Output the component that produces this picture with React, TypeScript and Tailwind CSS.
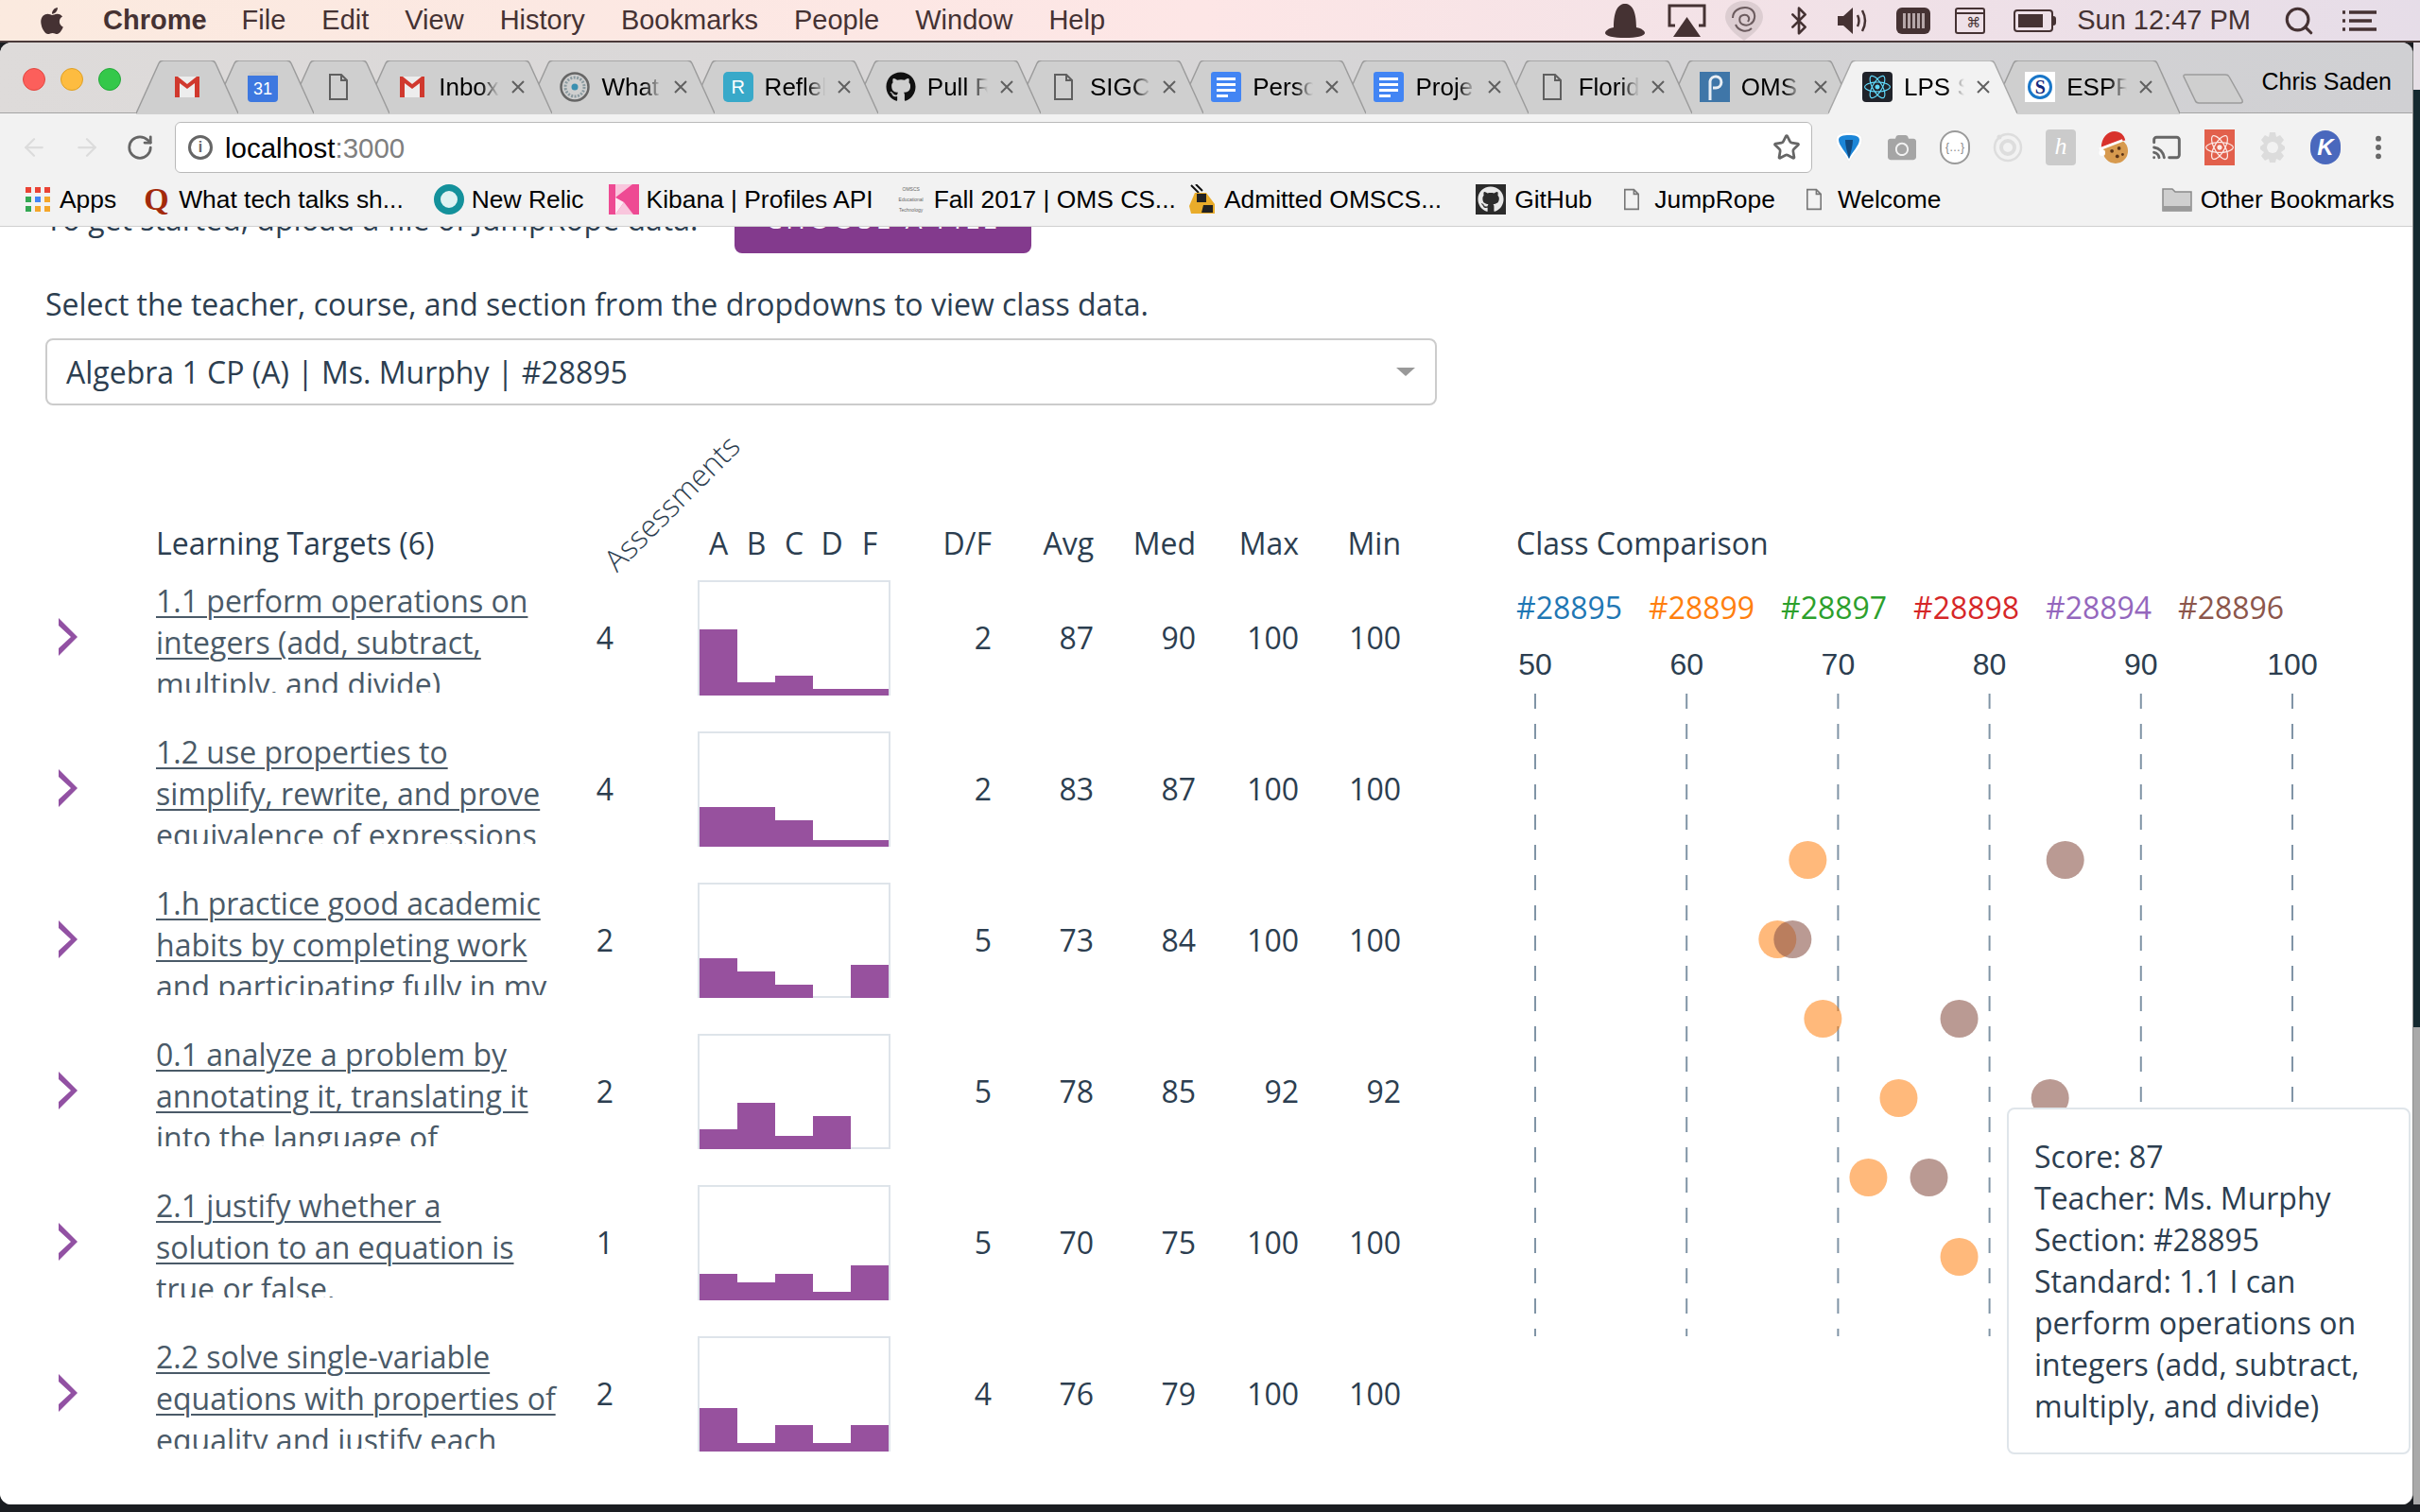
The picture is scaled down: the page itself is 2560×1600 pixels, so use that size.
import React from "react";
import { FaApple, FaGithub, FaReact, FaCamera } from "react-icons/fa";
import { Bluetooth, Search, Star, RotateCw, ArrowLeft, ArrowRight, Cast, EllipsisVertical } from "lucide-react";

const Gmail = () => (
  <svg width="32" height="32" viewBox="0 0 32 32" className="shrink-0">
    <path d="M3 5h26v22H3z" fill="#ededed" />
    <path d="M3 27V5h3l10 8 10-8h3v22h-5V12l-8 6-8-6v15z" fill="#d0392e" />
  </svg>
);
const Cal = () => (
  <div className="w-[32px] h-[32px] shrink-0 flex flex-col">
    <div className="h-[4px] mx-[1px] bg-[#c8c8c8] rounded-t-sm" />
    <div className="flex-1 rounded-b-sm bg-[#3d78e0] text-white text-[18px] leading-[28px] text-center">31</div>
  </div>
);
const FileI = ({ w = 20, h = 28, c = "#5f5f5f", sw = 2 }: { w?: number; h?: number; c?: string; sw?: number }) => (
  <svg width={w} height={h} viewBox="0 0 20 28" className="shrink-0">
    <path d="M1 1h12l6 6v20H1z M13 1v6h6" fill="none" stroke={c} strokeWidth={sw} />
  </svg>
);
const Wheel = () => (
  <svg width="32" height="32" viewBox="0 0 32 32" className="shrink-0">
    <circle cx="16" cy="16" r="14.5" fill="none" stroke="#666" strokeWidth="2.5" />
    <circle cx="16" cy="16" r="10" fill="none" stroke="#8a9aa0" strokeWidth="3" strokeDasharray="2 1.5" />
    <circle cx="16" cy="16" r="3.5" fill="#3a8fb0" />
  </svg>
);
const RIcon = () => (
  <div className="w-[32px] h-[32px] shrink-0 rounded-[5px] bg-[#38a9c9] text-white text-[20px] leading-[32px] text-center">R</div>
);
const Docs = () => (
  <div className="w-[32px] h-[32px] shrink-0 rounded-[3px] bg-[#4285f4] flex flex-col justify-center gap-[3px] pl-[6px]">
    <div className="w-[20px] h-[3px] bg-white" />
    <div className="w-[20px] h-[3px] bg-white" />
    <div className="w-[20px] h-[3px] bg-white" />
    <div className="w-[12px] h-[3px] bg-white" />
  </div>
);
const Oms = () => (
  <svg width="32" height="32" viewBox="0 0 32 32" className="shrink-0">
    <rect width="32" height="32" fill="#3f76a8" />
    <path d="M11 30V10a6 6 0 1 1 6 7h-3" fill="none" stroke="#e8eef4" strokeWidth="3" />
  </svg>
);
const ReactI = () => (
  <div className="w-[32px] h-[32px] shrink-0 rounded-[4px] bg-[#20232a] flex items-center justify-center">
    <FaReact size={28} color="#61dafb" />
  </div>
);
const SI = () => (
  <div className="w-[32px] h-[32px] shrink-0 bg-white flex items-center justify-center relative">
    <div className="w-[26px] h-[26px] rounded-full border-[3px] border-[#1976c8] text-[#13297e] text-[20px] leading-[20px] text-center font-bold font-['Liberation_Serif',serif]">S</div>
  </div>
);
const X = () => (
  <svg width="14" height="14" viewBox="0 0 14 14" className="shrink-0">
    <path d="M1 1l12 12M13 1L1 13" stroke="#606060" strokeWidth="2" />
  </svg>
);

const TabShape = ({ w, active }: { w: number; active?: boolean }) => (
  <svg width={w} height="57" viewBox={`0 0 ${w} 57`} className="absolute left-0 top-0">
    <path d={`M0 57L24 3Q25.5 0 29 0H${w - 29}Q${w - 25.5} 0 ${w - 24} 3L${w} 57Z`} fill={active ? "#f2f2f2" : "#cfcfcf"} />
    <path d={`M0 56L24 3Q25.5 0 29 0H${w - 29}Q${w - 25.5} 0 ${w - 24} 3L${w} 56`} fill="none" stroke={active ? "#a8a8a8" : "#9c9c9c"} strokeWidth="1.5" />
  </svg>
);

const pinned = [<Gmail />, <Cal />, <FileI />];
const tabs: { icon: React.ReactNode; t: string; active?: boolean }[] = [
  { icon: <Gmail />, t: "Inbox" },
  { icon: <Wheel />, t: "What" },
  { icon: <RIcon />, t: "Reflek" },
  { icon: <FaGithub size={32} className="shrink-0" color="#111" />, t: "Pull R" },
  { icon: <div className="w-[32px] flex justify-center shrink-0"><FileI /></div>, t: "SIGCl" },
  { icon: <Docs />, t: "Perso" },
  { icon: <Docs />, t: "Proje" },
  { icon: <div className="w-[32px] flex justify-center shrink-0"><FileI /></div>, t: "Florid" },
  { icon: <Oms />, t: "OMS" },
  { icon: <ReactI />, t: "LPS S", active: true },
  { icon: <SI />, t: "ESPR" },
];

const menus = ["File", "Edit", "View", "History", "Bookmarks", "People", "Window", "Help"];

const ink = "#453233";
const Hat = () => (
  <svg width="44" height="38" viewBox="0 0 44 38" className="shrink-0">
    <path d="M10 26C10 8 15 1 22 1s12 7 12 25c6 1 9 4 9 6 0 3-9 5-21 5S1 35 1 32c0-2 3-5 9-6z" fill={ink} />
  </svg>
);
const Airplay = () => (
  <svg width="41" height="36" viewBox="0 0 41 36" className="shrink-0">
    <path d="M8 23H2V2h37v21h-6" fill="none" stroke={ink} strokeWidth="3" />
    <path d="M20.500 14L35 35H6z" fill={ink} />
  </svg>
);
const Swirl = () => (
  <svg width="42" height="42" viewBox="0 0 42 42" className="shrink-0">
    <path d="M21 0c11 0 20 7 20 17 0 9-10 18-20 25C11 35 1 26 1 17 1 7 10 0 21 0z" fill="#dccdd1" />
    <path d="M9 18c0-7 6-11 13-11s11 5 10 11-7 9-12 7-5-9 0-10 8 3 5 7M12 25c3 7 12 9 17 4" fill="none" stroke="#6b5b5e" strokeWidth="2" />
  </svg>
);
const Volume = () => (
  <svg width="34" height="30" viewBox="0 0 34 30" className="shrink-0">
    <path d="M1 10h6l10-9v28L7 20H1z" fill={ink} />
    <path d="M22 9q3 6 0 12M27 4q6 11 0 22" fill="none" stroke={ink} strokeWidth="2.500" />
  </svg>
);
const Mem = () => (
  <div className="w-[36px] h-[28px] shrink-0 rounded-[6px] bg-[#453233] flex items-center justify-center gap-[2px] px-[4px]">
    {[0, 1, 2, 3, 4].map((i) => (
      <div key={i} className="w-[3px] h-[16px] bg-[#b5a6a8]" />
    ))}
  </div>
);
const Cmd = () => (
  <div className="w-[32px] h-[28px] shrink-0 rounded-[3px] border-2 border-[#453233] flex flex-col">
    <div className="h-[5px] border-b-2 border-[#453233]" />
    <div className="flex-1 flex items-center justify-end pr-[3px] text-[#453233] text-[15px] leading-[15px] font-['DejaVu_Sans',sans-serif]">⌘</div>
  </div>
);
const Batt = () => (
  <div className="flex items-center shrink-0">
    <div className="w-[42px] h-[24px] rounded-[4px] border-2 border-[#453233] p-[3px]">
      <div className="h-full w-[26px] bg-[#453233]" />
    </div>
    <div className="w-[3px] h-[10px] bg-[#453233] rounded-r-sm" />
  </div>
);
const ListI = () => (
  <svg width="36" height="24" viewBox="0 0 36 24" className="shrink-0">
    <path d="M7 3h29M7 12h24M7 21h29" stroke={ink} strokeWidth="3.500" />
    <path d="M0 3h3M0 12h3M0 21h3" stroke={ink} strokeWidth="3.500" />
  </svg>
);

const ColorBlock = ({ c, children }: { c: string; children?: React.ReactNode }) => (
  <div className="w-[32px] h-[32px] shrink-0 flex items-center justify-center" style={{ background: c }}>{children}</div>
);

const Apps = () => (
  <div className="grid grid-cols-3 gap-[4px] shrink-0">
    {["#ea4335", "#ea4335", "#ea4335", "#34a853", "#4285f4", "#f4a62a", "#34a853", "#f4a62a", "#f4a62a"].map((c, i) => (
      <div key={i} className="w-[6px] h-[6px]" style={{ background: c }} />
    ))}
  </div>
);
const Folder = () => (
  <svg width="32" height="26" viewBox="0 0 32 26" className="shrink-0">
    <path d="M1 25V2h10l3 3h17v20z" fill="#cfcfcf" stroke="#8a8a8a" strokeWidth="1.500" />
    <path d="M1 20h30v5H1z" fill="#9a9a9a" />
  </svg>
);
const Bee = () => (
  <svg width="30" height="32" viewBox="0 0 30 32" className="shrink-0">
    <path d="M3 1l8 8M8 0l7 7" stroke="#111" strokeWidth="2" />
    <path d="M7 9h12l9 12v10H3l-2-8z" fill="#e9ac2a" />
    <path d="M9 10h10v9H9zM16 22h10v8H14z" fill="#222" />
  </svg>
);
const Bm = ({ c, children }: { c: string; children: React.ReactNode }) => (
  <div className={`flex items-center shrink-0 ${c}`}>{children}</div>
);

const ToolSlot = ({ children }: { children: React.ReactNode }) => (
  <div className="w-[32px] h-[40px] flex items-center justify-center shrink-0">{children}</div>
);

const rows = [
  { l: ["1.1 perform operations on", "integers (add, subtract,", "multiply, and divide)"], n: 4, b: [70, 14, 21, 7, 7], v: [2, 87, 90, 100, 100] },
  { l: ["1.2 use properties to", "simplify, rewrite, and prove", "equivalence of expressions"], n: 4, b: [42, 42, 28, 7, 7], v: [2, 83, 87, 100, 100] },
  { l: ["1.h practice good academic", "habits by completing work", "and participating fully in my"], n: 2, b: [42, 28, 14, 0, 35], v: [5, 73, 84, 100, 100] },
  { l: ["0.1 analyze a problem by", "annotating it, translating it", "into the language of"], n: 2, b: [21, 49, 14, 35, 0], v: [5, 78, 85, 92, 92] },
  { l: ["2.1 justify whether a", "solution to an equation is", "true or false."], n: 1, b: [28, 19, 28, 9, 37], v: [5, 70, 75, 100, 100] },
  { l: ["2.2 solve single-variable", "equations with properties of", "equality and justify each"], n: 2, b: [46, 9, 28, 9, 28], v: [4, 76, 79, 100, 100] },
];

const statCols = ["w-[107px]", "w-[108px]", "w-[108px]", "w-[109px]", "w-[108px]"];
const statHead = ["D/F", "Avg", "Med", "Max", "Min"];
const legend = [
  ["#28895", "#1f77b4"],
  ["#28899", "#ff7f0e"],
  ["#28897", "#2ca02c"],
  ["#28898", "#d62728"],
  ["#28894", "#9467bd"],
  ["#28896", "#8c564b"],
];
const dots: [number, number | null][] = [
  [68, 85],
  [66, 67],
  [69, 78],
  [74, 84],
  [72, 76],
  [78, null],
];
const xOf = (v: number) => 20 + (v - 50) * 16.02;

export default function App() {
  return (
    <div className="w-[2560px] h-[1600px] overflow-hidden flex flex-col bg-[#1a1d21] font-['Liberation_Sans',sans-serif]">
      {/* macOS menu bar */}
      <div className="h-[45px] shrink-0 flex items-center border-b-2 border-[#4a3a3a] bg-gradient-to-r from-[#fbeadf] via-[#fde6e6] to-[#e6dde8] text-[29px] text-[#453233]">
        <FaApple size={32} className="ml-[39px] shrink-0" color="#453233" />
        <span className="ml-[38px] font-bold">Chrome</span>
        <div className="flex gap-[38px] ml-[37px]">
          {menus.map((m) => (
            <span key={m}>{m}</span>
          ))}
        </div>
        <div className="ml-auto flex items-center pr-[46px]">
          <Hat />
          <div className="ml-[23px]"><Airplay /></div>
          <div className="ml-[19px]"><Swirl /></div>
          <Bluetooth size={32} strokeWidth={2} color="#453233" className="ml-[21px] shrink-0" />
          <div className="ml-[24px]"><Volume /></div>
          <div className="ml-[29px]"><Mem /></div>
          <div className="ml-[26px]"><Cmd /></div>
          <div className="ml-[30px]"><Batt /></div>
          <span className="ml-[22px] text-[29px]">Sun 12:47 PM</span>
          <Search size={34} strokeWidth={2.2} color="#453233" className="ml-[34px] shrink-0" />
          <div className="ml-[29px]"><ListI /></div>
        </div>
      </div>

      <div className="flex h-[1547px] shrink-0">
        {/* Browser window */}
        <div className="w-[2553px] h-full rounded-t-[12px] rounded-b-[12px] overflow-hidden flex flex-col bg-white border-r border-[#8d8d8d]">
          {/* Tab strip */}
          <div className="h-[75px] shrink-0 relative flex items-end border-b border-[#a4a4a4] bg-gradient-to-r from-[#dedbda] to-[#d0d0d3]">
            <div className="flex gap-[16px] pl-[24px] self-start pt-[27px] shrink-0">
              <div className="w-[24px] h-[24px] rounded-full bg-[#fc5f5b] border border-[#e2463f]" />
              <div className="w-[24px] h-[24px] rounded-full bg-[#fdbc40] border border-[#dfa023]" />
              <div className="w-[24px] h-[24px] rounded-full bg-[#34c84a] border border-[#24a83a]" />
            </div>
            <div className="flex ml-[16px] h-[56px] shrink-0 translate-y-[1px]">
              {pinned.map((ic, i) => (
                <div key={i} className={`relative w-[108px] h-[56px] shrink-0 flex items-center justify-center ${i ? "-ml-[28px]" : ""}`} style={{ zIndex: 30 - i }}>
                  <TabShape w={108} />
                  <div className="relative">{ic}</div>
                </div>
              ))}
              {tabs.map((t, i) => (
                <div key={i} className="relative w-[200px] h-[56px] shrink-0 -ml-[27.800px] first:-ml-[26px] flex items-center pl-[36px] text-[26px] text-black" style={{ zIndex: t.active ? 40 : 20 - i }}>
                  <TabShape w={200} active={t.active} />
                  <div className="relative flex items-center">
                    {t.icon}
                    <div className="ml-[12px] w-[64px] overflow-hidden whitespace-nowrap [mask-image:linear-gradient(to_right,black_70%,transparent)]">{t.t}</div>
                    <div className="ml-[13px]"><X /></div>
                  </div>
                </div>
              ))}
            </div>
            <svg width="66" height="32" viewBox="0 0 66 32" className="shrink-0 self-start mt-[33px] ml-[2px]">
              <path d="M2 3Q1.500 1 4 1H46Q49 1 50 3L64 28Q65 31 62 31H18Q15 31 14 28Z" fill="#cfcfcf" stroke="#9c9c9c" strokeWidth="1.500" />
            </svg>
            <span className="ml-auto mr-[22px] self-start mt-[23px] text-[25px] text-black">Chris Saden</span>
          </div>

          {/* Toolbar */}
          <div className="h-[63px] shrink-0 flex items-start pt-[9px] pl-[21px] bg-[#f2f2f2]">
            <div className="h-[54px] flex items-center gap-[26px]">
              <ArrowLeft size={30} strokeWidth={1.800} color="#dcdcdc" className="shrink-0" />
              <ArrowRight size={30} strokeWidth={1.800} color="#dcdcdc" className="shrink-0" />
              <RotateCw size={30} strokeWidth={2.200} color="#666" className="shrink-0" />
            </div>
            <div className="w-[1732px] h-[54px] ml-[22px] shrink-0 rounded-[6px] bg-white border border-[#b9b9b9] flex items-center pl-[13px] pr-[11px]">
              <div className="w-[26px] h-[26px] rounded-full border-[3px] border-[#666] text-[#666] text-[16px] leading-[20px] font-bold text-center shrink-0">i</div>
              <div className="ml-[13px] mt-[2px] text-[29.500px] text-black">localhost<span className="text-[#7f7f7f]">:3000</span></div>
              <Star size={30} strokeWidth={2.200} color="#666" className="ml-auto shrink-0" />
            </div>
            <div className="flex gap-[24px] ml-[23px] h-[54px] items-center">
              <ToolSlot>
                <svg width="30" height="34" viewBox="0 0 30 34">
                  <path d="M15 33C11 24 1 17 1 9 1 3 8 1 15 1s14 2 14 8c0 8-10 15-14 24z" fill="#fff" stroke="#eee" />
                  <path d="M15 29C12 22 4 15 4 9c0-4 5-5 11-5s11 1 11 5c0 6-8 13-11 20z" fill="#1c86d8" />
                  <path d="M15 29C13 22 11 15 11 9h8c0 6-2 13-4 20z" fill="#114a80" />
                </svg>
              </ToolSlot>
              <ToolSlot><FaCamera size={30} color="#a5a5a5" /></ToolSlot>
              <ToolSlot>
                <div className="w-[32px] h-[36px] rounded-full border-2 border-[#9a9a9a] bg-white text-[#888] text-[12px] leading-[32px] text-center">{"{…}"}</div>
              </ToolSlot>
              <ToolSlot>
                <svg width="32" height="36" viewBox="0 0 32 36">
                  <circle cx="16" cy="18" r="14" fill="none" stroke="#ddd" strokeWidth="2.500" />
                  <circle cx="16" cy="18" r="7" fill="none" stroke="#ddd" strokeWidth="4" />
                  <circle cx="7" cy="7" r="2.500" fill="#ddd" />
                </svg>
              </ToolSlot>
              <ToolSlot>
                <div className="w-[32px] h-[38px] rounded-[4px] bg-[#cbcbcb] text-white text-[26px] leading-[36px] text-center italic font-['Liberation_Serif',serif]">h</div>
              </ToolSlot>
              <ToolSlot>
                <svg width="34" height="38" viewBox="0 0 34 38">
                  <circle cx="19" cy="23" r="14" fill="#d79a4e" />
                  <circle cx="15" cy="23" r="2" fill="#5a3418" /><circle cx="23" cy="20" r="2" fill="#5a3418" /><circle cx="21" cy="29" r="2" fill="#5a3418" /><circle cx="27" cy="27" r="1.500" fill="#5a3418" />
                  <path d="M3 20C3 8 10 1 18 1c6 0 11 4 12 10-6 1-19 3-27 9z" fill="#d8322c" />
                  <path d="M1 21l26-10" stroke="#fff" strokeWidth="3" />
                  <circle cx="4" cy="25" r="3.500" fill="#fff" />
                </svg>
              </ToolSlot>
              <ToolSlot><Cast size={32} strokeWidth={2.200} color="#666" /></ToolSlot>
              <ToolSlot>
                <div className="w-[32px] h-[38px] bg-[#e2604c] flex items-center justify-center">
                  <FaReact size={30} color="#fbeae7" />
                </div>
              </ToolSlot>
              <ToolSlot>
                <svg width="28" height="34" viewBox="0 0 28 34">
                  <path d="M11 1h6l1 5 4-2 4 5-3 4 4 3v3l-4 3 3 4-4 5-4-2-1 4h-6l-1-4-4 2-4-5 3-4-4-3v-3l4-3-3-4 4-5 4 2z" fill="#dcdcdc" />
                  <circle cx="14" cy="17" r="6" fill="#f2f2f2" />
                </svg>
              </ToolSlot>
              <ToolSlot>
                <div className="w-[32px] h-[36px] rounded-full bg-[#4a68bd] text-white text-[24px] leading-[36px] text-center font-bold italic">K</div>
              </ToolSlot>
              <ToolSlot><EllipsisVertical size={34} strokeWidth={2.400} color="#666" /></ToolSlot>
            </div>
          </div>

          {/* Bookmarks */}
          <div className="h-[57px] shrink-0 flex items-center pt-[1px] border-b border-[#d0d0d0] bg-[#f2f2f2] text-[26.400px] text-black whitespace-nowrap">
            <Bm c="ml-[27px] gap-[10px]"><Apps /><span>Apps</span></Bm>
            <Bm c="ml-[29px] gap-[11px]">
              <span className="w-[26px] text-[#a32a0c] text-[34px] leading-[34px] font-bold font-['Liberation_Serif',serif]">Q</span>
              <span>What tech talks sh...</span>
            </Bm>
            <Bm c="ml-[32px] gap-[8px]">
              <div className="w-[32px] h-[32px] rounded-full border-[7px] border-[#14919b] bg-[#dff2f2] shrink-0" />
              <span>New Relic</span>
            </Bm>
            <Bm c="ml-[26px] gap-[8px]">
              <ColorBlock c="#ee4a93">
                <svg width="32" height="32" viewBox="0 0 32 32"><path d="M7 0h18L7 14z" fill="#f9c6dd" /><path d="M7 32l9-13 10 13z" fill="#f9c6dd" /><path d="M7 14l9 5-9 13z" fill="#fdeaf3" /></svg>
              </ColorBlock>
              <span>Kibana | Profiles API</span>
            </Bm>
            <Bm c="ml-[24px] gap-[8px]">
              <div className="w-[32px] text-[5px] leading-[11px] text-center text-[#666] shrink-0">OMSCS<br />Educational<br />Technology</div>
              <span>Fall 2017 | OMS CS...</span>
            </Bm>
            <Bm c="ml-[13px] gap-[8px]"><Bee /><span>Admitted OMSCS...</span></Bm>
            <Bm c="ml-[36px] gap-[9px]">
              <ColorBlock c="#2b2b2b"><FaGithub size={28} color="#e8e8e8" /></ColorBlock>
              <span>GitHub</span>
            </Bm>
            <Bm c="ml-[34px] gap-[16px]"><FileI w={16} h={26} c="#777" /><span>JumpRope</span></Bm>
            <Bm c="ml-[33px] gap-[17px]"><FileI w={16} h={26} c="#777" /><span>Welcome</span></Bm>
            <Bm c="ml-auto mr-[19px] gap-[9px]"><Folder /><span>Other Bookmarks</span></Bm>
          </div>

          {/* Page, scrolled by 44px */}
          <div className="flex-1 relative overflow-hidden bg-white text-[32px] leading-[44px] text-[#2c3e50] font-['Open_Sans',sans-serif]">
            <div className="-mt-[44px] pl-[48px]">
              <div className="h-[72px] flex items-center">
                <span>To get started, upload a file of JumpRope data.</span>
                <div className="ml-[39px] w-[314px] h-[72px] rounded-[8px] bg-[#833a8d] flex items-center justify-center pb-[2px] text-[28px] tracking-[4px] text-white">CHOOSE A FILE</div>
              </div>
              <div className="mt-[32px]">Select the teacher, course, and section from the dropdowns to view class data.</div>
              <div className="mt-[14px] w-[1472px] h-[71px] rounded-[8px] border-2 border-[#cccccc] flex items-center pl-[20px] pr-[21px]">
                <span>Algebra 1 CP (A) | Ms. Murphy | #28895</span>
                <svg width="20" height="9" viewBox="0 0 20 9" className="ml-auto"><path d="M0 0h20L10 9z" fill="#999" /></svg>
              </div>

              <div className="mt-[124px] flex">
                {/* Table */}
                <div className="w-[1432px] shrink-0">
                  <div className="h-[44px] flex">
                    <div className="w-[117px] shrink-0" />
                    <div className="w-[440px] shrink-0 font-medium">Learning Targets (6)</div>
                    <div className="w-[70px] shrink-0 relative">
                      <span className="absolute left-[12px] top-[-43px] -rotate-45 whitespace-nowrap font-light text-[32px] text-[#2c3e50]">Assessments</span>
                    </div>
                    <div className="ml-[63px] w-[204px] shrink-0 flex pl-[2px]">
                      {["A", "B", "C", "D", "F"].map((g) => (
                        <span key={g} className="w-[40px] text-center">{g}</span>
                      ))}
                    </div>
                    {statHead.map((h, i) => (
                      <div key={h} className={`${statCols[i]} shrink-0 text-right`}>{h}</div>
                    ))}
                  </div>
                  <div className="mt-[17px] flex flex-col gap-[38px]">
                    {rows.map((r, ri) => (
                      <div key={ri} className="h-[122px] flex items-center">
                        <svg width="20" height="40" viewBox="0 0 20 40" className="ml-[14px] shrink-0 -mt-[2px]">
                          <path d="M0 0L20 20L0 40V32L13 20L0 8Z" fill="#9251a3" />
                        </svg>
                        <div className="ml-[83px] w-[440px] h-[119px] self-start overflow-hidden shrink-0 text-[#4a5a68]">
                          {r.l.map((s) => (
                            <div key={s} className="whitespace-nowrap"><span className="underline underline-offset-[4px] decoration-[2px]">{s}</span></div>
                          ))}
                        </div>
                        <div className="w-[70px] shrink-0 text-center">{r.n}</div>
                        <div className="ml-[63px] w-[204px] h-[122px] shrink-0 border-2 border-[#dee4ea] flex items-end">
                          {r.b.map((b, i) => (
                            <div key={i} className="w-[40px] -mb-[2px] bg-[#97519e]" style={{ height: b }} />
                          ))}
                        </div>
                        {r.v.map((v, i) => (
                          <div key={i} className={`${statCols[i]} shrink-0 text-right`}>{v}</div>
                        ))}
                      </div>
                    ))}
                  </div>
                </div>

                {/* Class comparison */}
                <div className="ml-[124px] shrink-0">
                  <div className="h-[44px]">Class Comparison</div>
                  <div className="mt-[24px] h-[44px] flex">
                    {legend.map(([t, c]) => (
                      <span key={t} className="w-[140px] shrink-0" style={{ color: c }}>{t}</span>
                    ))}
                  </div>
                  <svg width="880" height="740" viewBox="0 0 880 740" className="mt-[15px] block">
                    {[50, 60, 70, 80, 90, 100].map((t) => (
                      <g key={t}>
                        <text x={xOf(t)} y="34" textAnchor="middle" className="fill-[#2c3e50] text-[32px] font-['Liberation_Sans',sans-serif]">{t}</text>
                        <line x1={xOf(t)} x2={xOf(t)} y1="54" y2="734" stroke="#8094a6" strokeWidth="2" strokeDasharray="16 16" />
                      </g>
                    ))}
                    {dots.map(([o, b], i) => (
                      <g key={i}>
                        <circle cx={xOf(o)} cy={230 + i * 84} r="20" fill="#ff7f0e" fillOpacity="0.55" />
                        {b !== null && <circle cx={xOf(b)} cy={230 + i * 84} r="20" fill="#8c564b" fillOpacity="0.6" />}
                      </g>
                    ))}
                  </svg>
                </div>
              </div>
            </div>

            {/* Tooltip */}
            <div className="absolute left-[2123px] top-[932px] w-[427px] h-[367px] rounded-[8px] border-2 border-[#dfe5ea] bg-white pl-[27px] pr-[20px] pt-[28px]">
              <div>Score: 87</div>
              <div>Teacher: Ms. Murphy</div>
              <div>Section: #28895</div>
              <div>Standard: 1.1 I can perform operations on integers (add, subtract, multiply, and divide)</div>
            </div>
          </div>
        </div>

        {/* Desktop sliver to the right of the window */}
        <div className="w-[7px] shrink-0 flex flex-col">
          <div className="h-[50px] shrink-0 bg-[#e6dfe6]" />
          <div className="h-[992px] shrink-0 bg-[#14292f]" />
          <div className="flex-1 bg-[#a9a9a9]" />
        </div>
      </div>
    </div>
  );
}
